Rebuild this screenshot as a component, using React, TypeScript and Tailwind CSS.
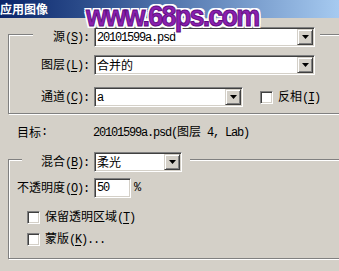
import type { ReactNode } from 'react'

const cjk = "font-['Noto_Sans_CJK_SC','Noto_Sans_CJK_JP',sans-serif]"
const mono = "font-['Liberation_Mono','Noto_Sans_CJK_SC',monospace] tracking-[-1.2px]"

function Key({ text, hot, tail = ':' }: { text: string; hot: string; tail?: string }) {
  return (
    <span className="whitespace-nowrap leading-[16px]">
      <span className={cjk}>{text}</span>
      <span className={mono}>
        (<span className="underline underline-offset-2">{hot}</span>){tail}
      </span>
    </span>
  )
}

function DropButton() {
  return (
    <div className="mr-[1px] flex h-[16px] w-[16px] shrink-0 items-center justify-center border border-t-[#d4d0c8] border-l-[#d4d0c8] border-r-[#404040] border-b-[#404040] bg-[#d4d0c8] shadow-[inset_1px_1px_0_#fff,inset_-1px_-1px_0_#808080]">
      <svg width="7" height="4" viewBox="0 0 7 4">
        <polygon points="0,0 7,0 3.5,4" fill="#000" />
      </svg>
    </div>
  )
}

function Sunken({ className, children }: { className: string; children: ReactNode }) {
  return (
    <div
      className={`flex items-center border border-t-[#808080] border-l-[#808080] border-r-white border-b-white bg-white shadow-[inset_1px_1px_0_#404040,inset_-1px_-1px_0_#d4d0c8] ${className}`}
    >
      {children}
    </div>
  )
}

function Combo({ className, children }: { className: string; children: ReactNode }) {
  return (
    <Sunken className={`h-[20px] ${className}`}>
      <div className="min-w-0 flex-1 pl-[2px] leading-[16px]">{children}</div>
      <DropButton />
    </Sunken>
  )
}

function Check() {
  return <Sunken className="h-[13px] w-[13px] shrink-0">{null}</Sunken>
}

export default function App() {
  return (
    <div className="relative h-[271px] w-[339px] overflow-hidden bg-[#d4d0c8] text-[12px] text-black">
      {/* 标题栏 */}
      <div className="flex h-[18px] items-center bg-gradient-to-r from-[#0a246a] to-[#a6caf0]">
        <span className={`${cjk} text-[12px] font-bold leading-[14px] text-white`}>应用图像</span>
      </div>

      {/* 源 */}
      <fieldset className="ml-[8px] mt-[3px] w-[345px] border border-[#808080] pb-[6px] pt-[8px] shadow-[inset_1px_1px_0_#fff,1px_1px_0_#fff]">
        <legend className="ml-[24px] bg-[#d4d0c8] pr-[5px] pt-[6px]">
          <div className="flex items-center">
            <div className="w-[56px] text-right">
              <Key text="源" hot="S" />
            </div>
            <Combo className="ml-[5px] w-[221px]">
              <span className={mono}>20101599a.psd</span>
            </Combo>
          </div>
        </legend>

        <div className="flex items-center">
          <div className="w-[80px] text-right">
            <Key text="图层" hot="L" />
          </div>
          <Combo className="ml-[5px] w-[221px]">
            <span className={cjk}>合并的</span>
          </Combo>
        </div>

        <div className="mt-[12px] flex items-center">
          <div className="w-[80px] text-right">
            <Key text="通道" hot="C" />
          </div>
          <Combo className="ml-[5px] w-[149px]">
            <span className={mono}>a</span>
          </Combo>
          <div className="ml-[17px]">
            <Check />
          </div>
          <div className="ml-[5px]">
            <Key text="反相" hot="I" tail="" />
          </div>
        </div>
      </fieldset>

      {/* 目标 */}
      <div className="mt-[10px] flex h-[16px] items-center leading-[16px]">
        <span className={`${cjk} ml-[17px]`}>目标</span>
        <span className={mono}>:</span>
        <span className="ml-[46px] whitespace-nowrap">
          <span className={mono}>20101599a.psd(</span>
          <span className={cjk}>图层</span>
          <span className={mono}> 4, Lab)</span>
        </span>
      </div>

      {/* 混合 */}
      <fieldset className="ml-[8px] mt-[6px] w-[345px] border border-[#808080] pb-[11px] pt-[6px] shadow-[inset_1px_1px_0_#fff,1px_1px_0_#fff]">
        <legend className="ml-[13px] bg-[#d4d0c8] pr-[8px] pt-[6px]">
          <div className="flex items-center">
            <div className="w-[67px] text-right">
              <Key text="混合" hot="B" />
            </div>
            <Combo className="ml-[5px] w-[88px]">
              <span className={cjk}>柔光</span>
            </Combo>
          </div>
        </legend>

        <div className="flex items-center">
          <div className="w-[80px] text-right">
            <Key text="不透明度" hot="O" />
          </div>
          <Sunken className="ml-[5px] h-[20px] w-[37px]">
            <span className={`${mono} pl-[2px] leading-[16px]`}>50</span>
          </Sunken>
          <span className={`${mono} ml-[3px] leading-[16px]`}>%</span>
        </div>

        <div className="ml-[18px] mt-[11px] flex h-[16px] items-center">
          <Check />
          <div className="ml-[5px]">
            <Key text="保留透明区域" hot="T" tail="" />
          </div>
        </div>

        <div className="ml-[18px] mt-[6px] flex h-[16px] items-center">
          <Check />
          <div className="ml-[5px]">
            <Key text="蒙版" hot="K" tail="..." />
          </div>
        </div>
      </fieldset>

      {/* 水印 */}
      <div className="pointer-events-none absolute left-[86px] top-[-7px] origin-left scale-x-[0.9] whitespace-nowrap font-['Liberation_Sans',sans-serif] text-[30px] font-bold tracking-[-2px] text-[#8b1fb0] [-webkit-text-stroke:1px_#5e0d80] [text-shadow:2px_0_0_#fff,-2px_0_0_#fff,0_2px_0_#fff,0_-2px_0_#fff,2px_2px_0_#fff,-2px_-2px_0_#fff,2px_-2px_0_#fff,-2px_2px_0_#fff]">
        www.68ps.com
      </div>
    </div>
  )
}
